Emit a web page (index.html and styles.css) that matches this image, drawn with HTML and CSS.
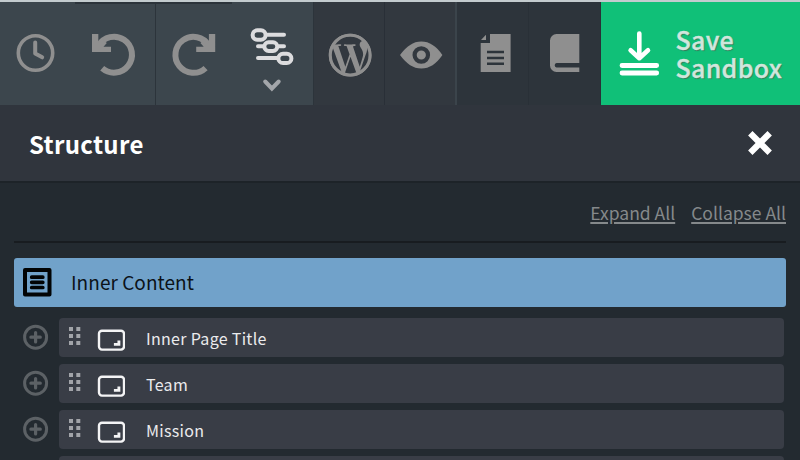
FILE: index.html
```
<!DOCTYPE html>
<html lang="en">
<head>
<meta charset="utf-8">
<title>Structure</title>
<link rel="stylesheet" href="styles.css">
</head>
<body>
<nav class="toolbar">
  <div class="cell history">
    <svg width="155" height="103" viewBox="0 2 155 103">
      <path d="M75 3H155" stroke="#2c343b" stroke-width="2"/>
      <g fill="none" stroke="#8f8f8f">
        <circle cx="35.5" cy="53" r="17.2" stroke-width="3.6"/>
        <path d="M35.2 42.5V53.5L42.2 57.3" stroke-width="4" stroke-linecap="round" stroke-linejoin="round"/>
        <path d="M98.5 45.5A18 18 0 1 1 102.2 68.3" stroke-width="6"/>
      </g>
      <path fill="#8f8f8f" d="M92 34h6.3v8.5l4.5-3 4 3.5-3.3 3.7H111V52H92z"/>
    </svg>
  </div>
  <div class="cell options">
    <svg width="157" height="103" viewBox="156 2 157 103">
      <path d="M156 3H232" stroke="#2c343b" stroke-width="2"/>
      <path d="M208.8 45.5A18 18 0 1 0 205.6 68.1" fill="none" stroke="#8f8f8f" stroke-width="6"/>
      <path fill="#8f8f8f" d="M215.2 34h-6.3v8.5l-4.5-3-4 3.5 3.3 3.7h-7.5V52h19z"/>
      <g fill="none" stroke="#dcdcde" stroke-width="4" stroke-linecap="round">
        <path d="M267 34.8H284M258 46.3H264M279 46.3H284M258 58H278"/>
        <rect x="252.6" y="30.3" width="13" height="9.4" rx="4.7"/>
        <rect x="264.3" y="42.3" width="13" height="8.6" rx="4.3"/>
        <rect x="278.4" y="53.8" width="13" height="9.2" rx="4.6"/>
      </g>
      <path d="M265.2 81.5L271.9 88.5L278.7 81.5" fill="none" stroke="#a3a6aa" stroke-width="4" stroke-linecap="round"/>
    </svg>
  </div>
  <div class="cell mid">
    <svg width="71" height="103" viewBox="314 2 71 103">
      <g transform="translate(328.8 33.8) scale(1.78)" fill="#8f8f8f">
        <path d="M21.469 6.825c.84 1.537 1.318 3.3 1.318 5.175 0 3.979-2.156 7.456-5.363 9.325l3.295-9.527c.615-1.54.82-2.771.82-3.864 0-.405-.026-.78-.07-1.11m-7.981.105c.647-.03 1.232-.105 1.232-.105.582-.075.514-.93-.067-.899 0 0-1.755.135-2.88.135-1.064 0-2.85-.15-2.85-.15-.585-.03-.661.855-.075.885 0 0 .54.061 1.125.09l1.68 4.605-2.37 7.08L5.354 6.9c.649-.03 1.234-.1 1.234-.1.585-.075.516-.93-.065-.896 0 0-1.746.138-2.874.138-.2 0-.438-.008-.69-.015C4.911 3.15 8.235 1.215 12 1.215c2.809 0 5.365 1.072 7.286 2.833-.046-.003-.091-.009-.141-.009-1.06 0-1.812.923-1.812 1.914 0 .89.513 1.643 1.06 2.531.411.72.89 1.643.89 2.977 0 .915-.354 1.994-.821 3.479l-1.075 3.585-3.9-11.61.001.014zM12 22.784c-1.059 0-2.081-.153-3.048-.437l3.237-9.406 3.315 9.087c.024.053.05.101.078.149-1.12.393-2.325.609-3.582.609M1.211 12c0-1.564.336-3.05.935-4.39L7.29 21.709C3.694 19.96 1.212 16.271 1.211 12M12 0C5.385 0 0 5.385 0 12s5.385 12 12 12 12-5.385 12-12S18.615 0 12 0"/>
        <circle cx="12" cy="12" r="11.15" fill="none" stroke="#8f8f8f" stroke-width="1.7"/>
      </g>
    </svg>
  </div>
  <div class="cell mid last">
    <svg width="71" height="103" viewBox="385 2 71 103">
      <path fill="#8f8f8f" d="M400 55C407 46 413 41.5 421.3 41.5S436 46 442.4 55C436 64 429.6 68.5 421.3 68.5S407 64 400 55z"/>
      <circle cx="421.3" cy="55" r="6.7" fill="none" stroke="#32383f" stroke-width="4.2"/>
    </svg>
  </div>
  <div class="cell dark">
    <svg width="72" height="103" viewBox="457 2 72 103">
      <path fill="#8f8f8f" d="M490 34H510.6V72H480.7V43h9.3zM486 34.7V40h-5z"/>
      <path d="M487 52H504M487 58H504M487 63.7H504" stroke="#2d343b" stroke-width="2.6"/>
    </svg>
  </div>
  <div class="cell dark">
    <svg width="72" height="103" viewBox="529 2 72 103">
      <path fill="#8f8f8f" d="M556.5 34H579.3V63H556.5a2.3 2.3 0 0 0 0 4.5H579.3V72H556.5a6.5 6.5 0 0 1-6.5-6.5V40.5a6.5 6.5 0 0 1 6.5-6.5z"/>
    </svg>
  </div>
  <div class="save">
    <svg width="74" height="103" viewBox="601 2 74 103">
      <g fill="none" stroke="#fff" stroke-linecap="round" stroke-linejoin="round">
        <path d="M639.3 33.6V58M630.6 50.2L639.3 58.2L648 50.2" stroke-width="4.6"/>
        <path d="M622 65.5H656.7M622 73H656.7" stroke-width="4.8"/>
      </g>
    </svg>
    <span class="save-text">Save<br>Sandbox</span>
  </div>
</nav>
<header class="panel-head">
  <h1>Structure</h1>
  <svg width="26" height="26" viewBox="0 0 26 26"><path d="M3.3 3.3L22.7 22.7M22.7 3.3L3.3 22.7" stroke="#fff" stroke-width="6.2"/></svg>
</header>
<main class="panel">
  <div class="links"><a class="expand">Expand All</a><a class="collapse">Collapse All</a></div>
  <div class="root">
    <svg width="29" height="29" viewBox="0 0 29 29"><path d="M2 2H26.5V26.5H2z" fill="none" stroke="#020405" stroke-width="4" stroke-linejoin="round"/><path d="M8.7 9.2H19.8M8.7 14.3H19.8M8.7 19.5H19.8" stroke="#020405" stroke-width="3.7" stroke-linecap="round"/></svg>
    <span>Inner Content</span>
  </div>
  <svg class="defs" width="0" height="0">
    <symbol id="plus" viewBox="0 0 26 26"><g fill="none" stroke="#5c6165"><circle cx="12.6" cy="13.2" r="11" stroke-width="3"/><path d="M7.9 13.2H17.3M12.6 8.5V17.9" stroke-width="3.2" stroke-linecap="round"/></g></symbol>
    <symbol id="grip" viewBox="0 0 12 20"><path fill="#a2a4a9" d="M0 1h4v4H0zM7.3 1h4v4h-4zM0 8h4v4H0zM7.3 8h4v4h-4zM0 15h4v4H0zM7.3 15h4v4h-4z"/></symbol>
    <symbol id="frame" viewBox="0 0 28 22"><rect x="2" y="1.8" width="25" height="18.8" rx="3" fill="none" stroke="#f4f4f5" stroke-width="2.4"/><path d="M21.9 11.4V15.4H16.9" fill="none" stroke="#f4f4f5" stroke-width="2.9"/></symbol>
  </svg>
  <div class="row"><svg class="plus"><use href="#plus"/></svg><div class="item"><svg class="grip"><use href="#grip"/></svg><svg class="frame"><use href="#frame"/></svg><span>Inner Page Title</span></div></div>
  <div class="row"><svg class="plus"><use href="#plus"/></svg><div class="item"><svg class="grip"><use href="#grip"/></svg><svg class="frame"><use href="#frame"/></svg><span>Team</span></div></div>
  <div class="row"><svg class="plus"><use href="#plus"/></svg><div class="item"><svg class="grip"><use href="#grip"/></svg><svg class="frame"><use href="#frame"/></svg><span>Mission</span></div></div>
  <div class="row"><div class="item next"></div></div>
</main>
</body>
</html>
```
FILE: styles.css
```
* { box-sizing: border-box; }
body {
  margin: 0;
  height: 460px;
  overflow: hidden;
  background: #232a30;
  color: #fff;
  font-family: "Noto Sans CJK SC", "Noto Sans", sans-serif;
}
svg { display: block; flex: none; }
.toolbar {
  display: grid;
  grid-template-columns: 156px 158px 71px 72px 72px 72px 199px;
  height: 105px;
  border-top: 2px solid #c3cbce;
}
.cell { height: 103px; overflow: hidden; background: #3c464d; border-right: 1px solid #2c343b; }
.mid { background: #32383f; border-right-color: #292f37; }
.last { border-right: 2px solid #3b444b; }
.dark { background: #2d343b; border-right-color: #293037; }
.save { display: flex; background: #10c078; }
.save-text {
  padding: 23px 0 0 0.5px;
  color: #d0e6dc;
  font-size: 25px;
  font-weight: 500;
  line-height: 28px;
  letter-spacing: 0.3px;
  -webkit-text-stroke: 0.4px #d0e6dc;
  text-shadow: 1px 1px 1px #36785a;
}
.panel-head {
  display: flex;
  justify-content: space-between;
  align-items: center;
  height: 78px;
  padding: 0 27px 0 29px;
  background: #30353d;
  border-bottom: 2px solid #1d2328;
}
h1 { margin: 1px 0 0; font-size: 24px; font-weight: 700; line-height: 32px; letter-spacing: 0.3px; }
.panel { height: 277px; padding: 0 14px; overflow: hidden; }
.links {
  display: flex;
  justify-content: flex-end;
  gap: 16px;
  height: 60px;
  padding-top: 16px;
  border-bottom: 2px solid #181c20;
  color: #85898b;
  font-size: 17.5px;
  line-height: 28px;
}
.links a { text-decoration: underline; text-underline-offset: 2px; text-decoration-thickness: 2px; }
.root {
  display: flex;
  align-items: center;
  height: 49px;
  margin: 15px 0 11px;
  padding-left: 9px;
  border-radius: 3px;
  background: #71a2ca;
  color: #0c1218;
  font-size: 19px;
}
.root span { margin: -2px 0 0 19px; line-height: 28px; letter-spacing: 0.05px; }
.row { display: flex; height: 39px; margin-bottom: 7px; padding: 0 2px 0 9px; }
.plus { width: 26px; height: 26px; margin-top: 6px; }
.item {
  display: flex;
  width: 725px;
  margin-left: 10px;
  padding-left: 10px;
  border-radius: 4px;
  background: #393d46;
  color: #ebebed;
  font-size: 16px;
  letter-spacing: 0.3px;
}
.next { margin-left: 36px; }
.grip { width: 12px; height: 20px; margin-top: 8px; }
.frame { width: 28px; height: 22px; margin: 11px 0 0 16px; }
.item span { margin: 6px 0 0 21px; line-height: 28px; }
.defs { position: absolute; }
```
